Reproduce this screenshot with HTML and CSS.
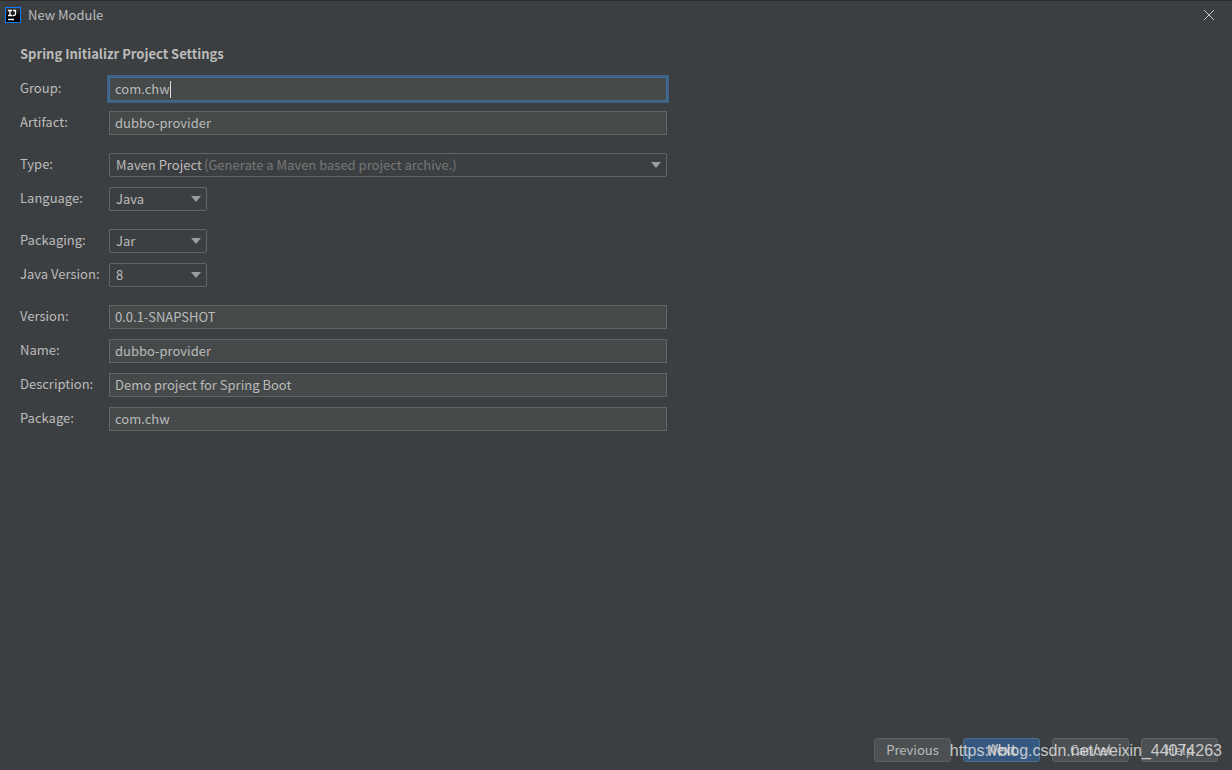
FILE: index.html
```html
<!DOCTYPE html>
<html lang="en">
<head>
<meta charset="utf-8">
<meta name="viewport" content="width=device-width, initial-scale=1">
<title>New Module</title>
<link rel="stylesheet" href="styles.css">
</head>
<body>
<div class="dialog">
  <header class="titlebar">
    <svg class="logo" width="16" height="16" viewBox="0 0 16 16" aria-hidden="true">
      <defs><linearGradient id="ink" x1="0" y1="0" x2="0" y2="1"><stop offset="0" stop-color="#3a3a3a"/><stop offset="0.6" stop-color="#000"/></linearGradient></defs>
      <rect width="16" height="16" fill="#087cfa"/>
      <rect x="1" y="1" width="14" height="14" fill="url(#ink)"/>
      <path d="M3 3.500h4M5 3v6M3 8.500h4M8 3.500h3M10.500 3v4q0 1.500-1.500 1.500H7.500M3 12.500h6" fill="none" stroke="#fff" stroke-width="1.300"/>
    </svg>
    <h1 class="title">New Module</h1>
    <button class="close" type="button" aria-label="Close">
      <svg width="10" height="10" viewBox="0 0 10 10" aria-hidden="true"><path d="M0 0l10 10M10 0L0 10" stroke="#c4c6c7" stroke-width="1"/></svg>
    </button>
  </header>
  <main class="content">
    <h2 class="heading">Spring Initializr Project Settings</h2>
    <form class="form" id="settings">
      <div class="group">
        <label for="group">Group:</label>
        <div class="stack"><input class="field focused" id="group" type="text" value="com.chw"><span class="cursor"></span></div>
        <label for="artifact">Artifact:</label>
        <input class="field" id="artifact" type="text" value="dubbo-provider">
      </div>
      <div class="group">
        <label for="type">Type:</label>
        <div class="stack combo">
          <select class="field" id="type"><option>Maven Project</option></select>
          <span class="hint">(Generate a Maven based project archive.)</span>
        </div>
        <label for="language">Language:</label>
        <div class="stack combo small"><select class="field" id="language"><option>Java</option></select></div>
      </div>
      <div class="group">
        <label for="packaging">Packaging:</label>
        <div class="stack combo small"><select class="field" id="packaging"><option>Jar</option></select></div>
        <label for="java">Java Version:</label>
        <div class="stack combo small"><select class="field" id="java"><option>8</option></select></div>
      </div>
      <div class="group">
        <label for="version">Version:</label>
        <input class="field" id="version" type="text" value="0.0.1-SNAPSHOT">
        <label for="name">Name:</label>
        <input class="field" id="name" type="text" value="dubbo-provider">
        <label for="description">Description:</label>
        <input class="field" id="description" type="text" value="Demo project for Spring Boot">
        <label for="package">Package:</label>
        <input class="field" id="package" type="text" value="com.chw">
      </div>
    </form>
  </main>
  <footer class="actions">
    <button class="button" type="button">Previous</button>
    <button class="button primary" type="button">Next</button>
    <button class="button" type="button">Cancel</button>
    <button class="button" type="button">Help</button>
    <span class="watermark">https://blog.csdn.net/weixin_44074263</span>
  </footer>
</div>
</body>
</html>
```
FILE: styles.css
```css
* { box-sizing: border-box; }

body {
  margin: 0;
  background: #3c3f41;
  color: #bbbbbb;
  font: 13px/20px "Noto Sans CJK SC", "Noto Sans", sans-serif;
}

.dialog {
  display: flex;
  flex-direction: column;
  min-height: 100vh;
  border-top: 1px solid #2b2b2b;
}

.titlebar {
  display: flex;
  align-items: center;
  gap: 7px;
  height: 28px;
  padding: 0 18px 0 5px;
}

.logo, .close svg { display: block; }

.title {
  margin: 0;
  font-size: 13px;
  font-weight: 400;
}

.close {
  margin-left: auto;
  padding: 0;
  border: 0;
  background: none;
}

.content {
  flex: 1;
  padding: 15px 20px 0;
}

.heading {
  margin: 0 0 13px;
  font-size: 13px;
  font-weight: 700;
}

.form {
  display: grid;
  gap: 18px;
  max-width: 647px;
}

.group {
  display: grid;
  grid-template-columns: 89px 1fr;
  gap: 10px 0;
  align-items: center;
}

.group label { padding-bottom: 2px; }

.stack {
  display: grid;
  align-items: center;
}

.stack > * { grid-area: 1 / 1; }

.field {
  width: 100%;
  height: 24px;
  margin: 0;
  padding: 0 5px 2px;
  border: 1px solid #646464;
  border-radius: 0;
  outline: 0;
  background: #45494a;
  color: #bbbbbb;
  font: inherit;
}

.focused {
  border-color: #466d94;
  box-shadow: 0 0 0 2px #3d6185;
}

.cursor {
  width: 1px;
  height: 17px;
  margin-left: 61px;
  background: #dddddd;
}

.combo .field {
  appearance: none;
  padding: 0 6px 1px;
  border-radius: 2px;
  background: #3c3f41;
}

.combo::after {
  content: "";
  grid-area: 1 / 1;
  justify-self: end;
  width: 10px;
  height: 6px;
  margin-right: 6px;
  background: #9a9da0;
  clip-path: polygon(0 0, 100% 0, 50% 100%);
  pointer-events: none;
}

.small { width: 98px; }

.hint {
  margin-left: 95px;
  padding-bottom: 1px;
  color: #777777;
  pointer-events: none;
}

.actions {
  position: relative;
  display: flex;
  justify-content: flex-end;
  gap: 12px;
  padding: 0 14px 8px;
}

.button {
  width: 77px;
  height: 24px;
  padding: 0;
  border: 1px solid #5e6060;
  border-radius: 3px;
  background: #4c5052;
  color: #bbbbbb;
  font: inherit;
}

.primary {
  border-color: #4c708c;
  background: #365880;
  font-weight: 700;
}

.watermark {
  position: absolute;
  right: 10px;
  top: 3px;
  color: rgba(225, 225, 225, 0.85);
  font: 16px/20px "Liberation Sans", Arial, sans-serif;
  pointer-events: none;
}
```
